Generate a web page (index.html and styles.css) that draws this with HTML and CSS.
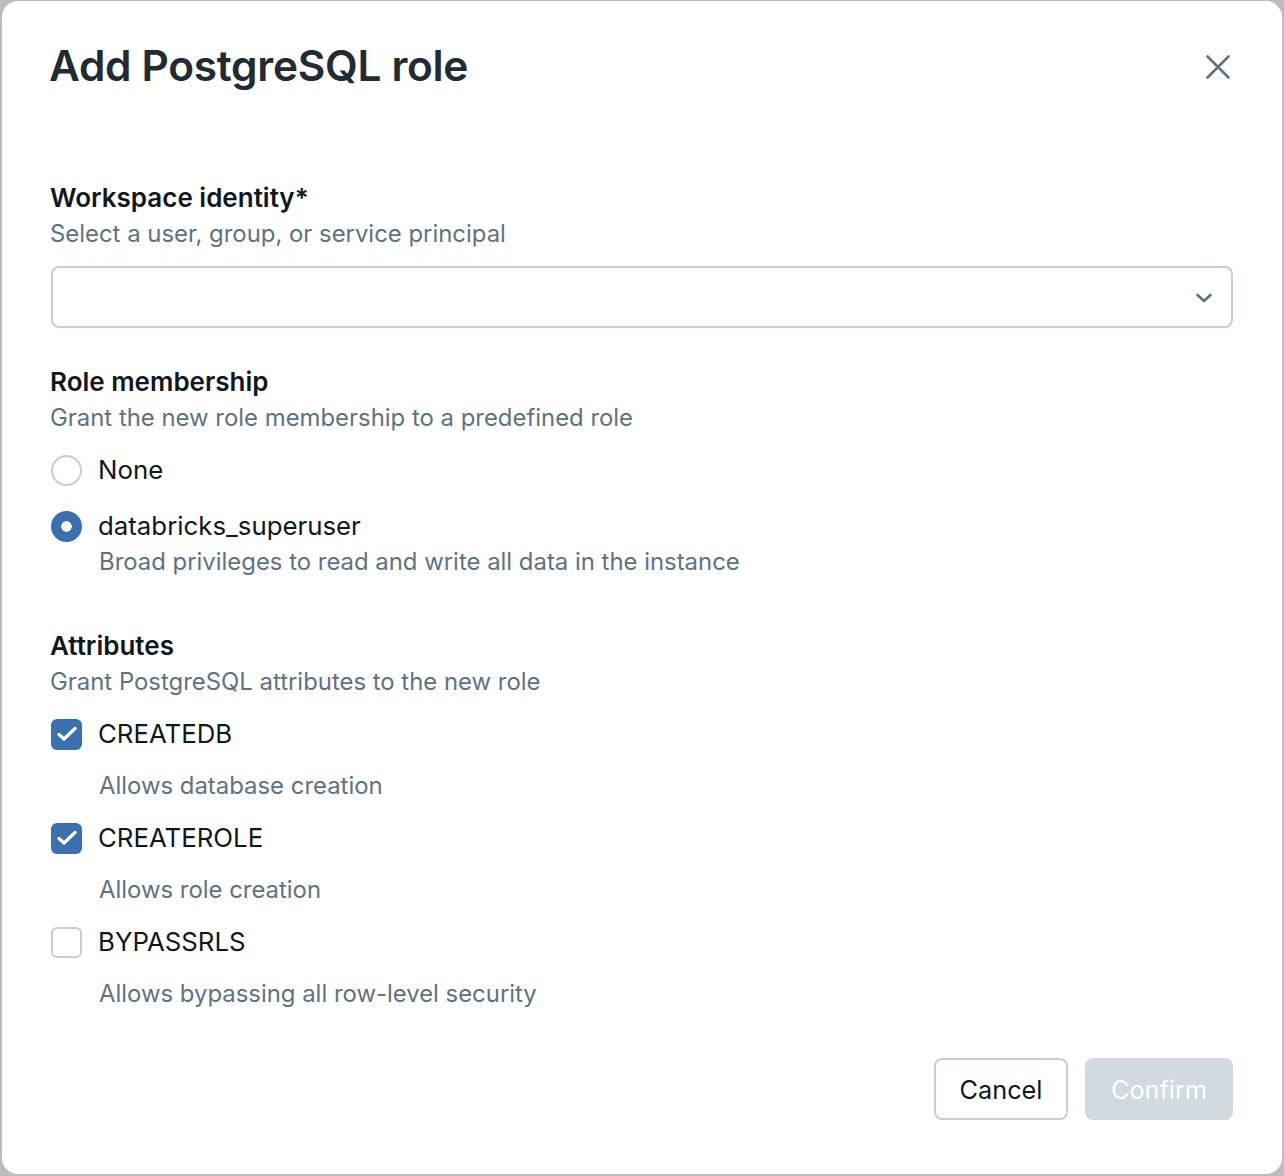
FILE: index.html
```html
<!DOCTYPE html>
<html>
<head>
<meta charset="utf-8">
<link rel="stylesheet" href="styles.css">
</head>
<body>
<div class="modal">
  <div class="header">
    <h1 class="title">Add PostgreSQL role</h1>
    <button class="close" aria-label="Close">
      <svg width="26" height="26" viewBox="0 0 26 26"><path d="M2.5 2.5 L23.5 23.5 M23.5 2.5 L2.5 23.5" stroke="#5f7281" stroke-width="2.6" stroke-linecap="round" fill="none"/></svg>
    </button>
  </div>

  <div class="section first">
    <div class="label">Workspace identity*</div>
    <div class="hint">Select a user, group, or service principal</div>
    <div class="select">
      <svg width="18" height="12" viewBox="0 0 18 12"><path d="M2.5 3 L9 9 L15.5 3" stroke="#5f7281" stroke-width="2.6" stroke-linecap="round" stroke-linejoin="round" fill="none"/></svg>
    </div>
  </div>

  <div class="section s2">
    <div class="label">Role membership</div>
    <div class="hint">Grant the new role membership to a predefined role</div>
    <div class="radios">
      <div class="opt"><span class="radio"></span><span class="opt-text">None</span></div>
      <div class="opt-group">
        <div class="opt"><span class="radio on"></span><span class="opt-text">databricks_superuser</span></div>
        <div class="desc">Broad privileges to read and write all data in the instance</div>
      </div>
    </div>
  </div>

  <div class="section s3">
    <div class="label">Attributes</div>
    <div class="hint">Grant PostgreSQL attributes to the new role</div>
    <div class="checks">
      <div class="opt"><span class="check on"><svg width="22" height="18" viewBox="0 0 22 18"><path d="M3 9.5 L8 14 L19 3.5" stroke="#fff" stroke-width="3.3" stroke-linecap="round" stroke-linejoin="round" fill="none"/></svg></span><span class="opt-text">CREATEDB</span></div>
      <div class="desc">Allows database creation</div>
      <div class="opt"><span class="check on"><svg width="22" height="18" viewBox="0 0 22 18"><path d="M3 9.5 L8 14 L19 3.5" stroke="#fff" stroke-width="3.3" stroke-linecap="round" stroke-linejoin="round" fill="none"/></svg></span><span class="opt-text">CREATEROLE</span></div>
      <div class="desc">Allows role creation</div>
      <div class="opt"><span class="check"></span><span class="opt-text">BYPASSRLS</span></div>
      <div class="desc">Allows bypassing all row-level security</div>
    </div>
  </div>

  <div class="footer">
    <button class="btn cancel">Cancel</button>
    <button class="btn confirm" disabled>Confirm</button>
  </div>
</div>
</body>
</html>
```

FILE: styles.css
```css
* { box-sizing: border-box; }
html, body { margin: 0; padding: 0; }
body {
  background: #bdbdbd;
  font-family: Inter, "Noto Sans", sans-serif;
  width: 1284px;
  height: 1176px;
  overflow: hidden;
}
.modal {
  margin: 1px 2px 0 2px;
  width: 1280px;
  height: 1173px;
  background: #fff;
  border-radius: 16px;
  padding: 0 49px;
  display: flex;
  flex-direction: column;
}
.header {
  display: flex;
  align-items: center;
  justify-content: space-between;
  padding-top: 41px;
  height: 89px;
}
.title {
  margin: 0 0 0 -2px;
  font-size: 42.4px;
  line-height: 48px;
  font-weight: 600;
  color: #232a31;
  letter-spacing: -0.3px;
}
.close {
  border: 0;
  background: none;
  padding: 0;
  width: 26px;
  height: 26px;
  margin-right: 2px;
  margin-top: 1px;
  display: flex;
}
.section { display: flex; flex-direction: column; }
.first { margin-top: 90px; }
.s2 { margin-top: 36px; }
.s3 { margin-top: 48px; }
.label {
  margin-left: -1px;
  font-size: 26px;
  line-height: 36px;
  font-weight: 600;
  color: #11171c;
}
.hint, .desc {
  font-size: 23.9px;
  line-height: 36px;
  color: #5f7281;
}
.hint { margin-left: -1px; }
.select {
  margin-top: 14px;
  height: 62px;
  border: 2px solid #c4ced8;
  border-radius: 8px;
  display: flex;
  align-items: center;
  justify-content: flex-end;
  padding-right: 18px;
}
.select svg { margin-top: 2px; }
.radios { display: flex; flex-direction: column; gap: 20px; margin-top: 16px; }
.checks { display: flex; flex-direction: column; gap: 16px; margin-top: 16px; }
.opt {
  display: flex;
  align-items: center;
  gap: 16px;
  height: 36px;
}
.opt-text {
  font-size: 25.8px;
  line-height: 36px;
  color: #11171c;
}
.desc { padding-left: 48px; }
.radio {
  width: 31px;
  height: 31px;
  border-radius: 50%;
  border: 2px solid #c4ced8;
  background: #fff;
  flex: none;
}
.radio.on {
  border: 0;
  background: radial-gradient(circle, #fff 0 5px, #3a6fb0 5.5px);
}
.check {
  width: 31px;
  height: 31px;
  border-radius: 6px;
  border: 2px solid #c4ced8;
  background: #fff;
  flex: none;
  display: flex;
  align-items: center;
  justify-content: center;
}
.check.on { border: 0; background: #3a6fb0; }
.footer {
  margin-top: auto;
  margin-bottom: 54px;
  display: flex;
  justify-content: flex-end;
  gap: 17px;
}
.btn {
  height: 62px;
  border-radius: 8px;
  font-family: Inter, "Noto Sans", sans-serif;
  font-size: 25.3px;
  padding: 0;
}
.cancel {
  width: 134px;
  border: 2px solid #c4ced8;
  background: #fff;
  color: #11171c;
}
.confirm {
  width: 148px;
  border: 0;
  background: #d1d9e1;
  color: #fff;
}
```
